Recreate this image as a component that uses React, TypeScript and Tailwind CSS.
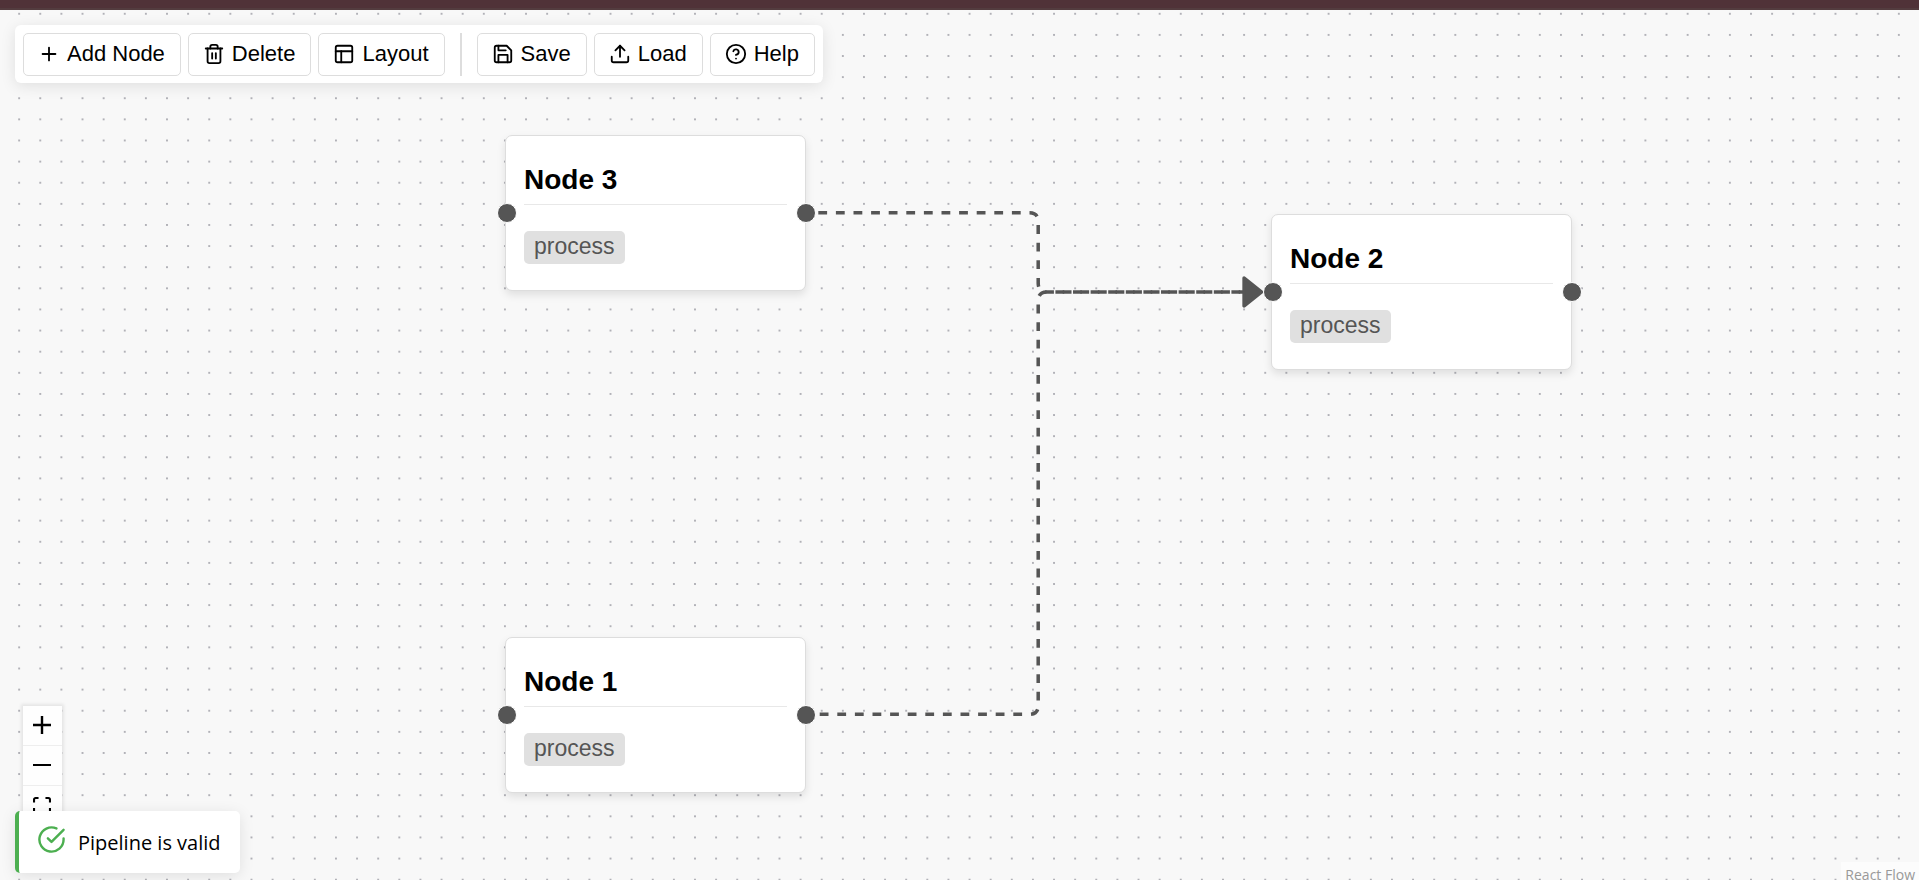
import type { ReactNode } from "react";
import { FiCheckCircle, FiHelpCircle, FiLayout, FiPlus, FiSave, FiTrash2, FiUpload } from "react-icons/fi";

type FlowNode = { id: string; label: string; kind: string; x: number; y: number };

const nodes: FlowNode[] = [
  { id: "3", label: "Node 3", kind: "process", x: 505, y: 125 },
  { id: "2", label: "Node 2", kind: "process", x: 1271, y: 204 },
  { id: "1", label: "Node 1", kind: "process", x: 505, y: 627 },
];

function ToolButton({ icon, children }: { icon: ReactNode; children: ReactNode }) {
  return (
    <button
      type="button"
      className="flex items-center gap-[7px] rounded-[5px] border border-[#dddddd] bg-white pt-[7px] pr-[15px] pb-[9px] pl-[14px] text-[22px] leading-[25px] whitespace-nowrap text-black"
    >
      {icon}
      {children}
    </button>
  );
}

function Toolbar() {
  return (
    <div
      role="toolbar"
      className="absolute top-[15px] left-[15px] flex gap-[7px] rounded-md bg-white pt-2 pr-2 pb-[7px] pl-2 shadow-[0_3px_15px_rgba(0,0,0,0.1)]"
    >
      <ToolButton icon={<FiPlus size={22} />}>Add Node</ToolButton>
      <ToolButton icon={<FiTrash2 size={22} />}>Delete</ToolButton>
      <ToolButton icon={<FiLayout size={22} />}>Layout</ToolButton>
      <div className="mx-2 w-[2px] bg-[#dddddd]" />
      <ToolButton icon={<FiSave size={22} />}>Save</ToolButton>
      <ToolButton icon={<FiUpload size={22} />}>Load</ToolButton>
      <ToolButton icon={<FiHelpCircle size={22} />}>Help</ToolButton>
    </div>
  );
}

function Dots() {
  return (
    <svg className="absolute inset-0 h-full w-full" aria-hidden="true">
      <pattern id="dots" x="8.6" y="-6.8" width="21.12" height="21.12" patternUnits="userSpaceOnUse">
        <circle cx="10.56" cy="10.56" r="0.88" fill="#91919a" />
      </pattern>
      <rect width="100%" height="100%" fill="url(#dots)" />
    </svg>
  );
}

function Edges() {
  return (
    <svg className="absolute inset-0 h-full w-full" aria-hidden="true" fill="none" stroke="#555555" strokeWidth="3.52">
      <path
        strokeDasharray="8.8"
        d="M819.7 704.3 L1029.4 704.3 Q1038.2 704.3 1038.2 695.5 L1038.2 290.8 Q1038.2 282 1047 282 L1261.6 282"
      />
      <path
        strokeDasharray="8.8"
        d="M818.3 202.8 L1029.4 202.8 Q1038.2 202.8 1038.2 211.6 L1038.2 273.2 Q1038.2 282 1047 282 L1261.6 282"
      />
      <path strokeLinejoin="round" fill="#555555" d="M1244.1 268 L1261.6 282 L1244.1 296 Z" />
    </svg>
  );
}

function NodeCard({ node }: { node: FlowNode }) {
  return (
    <article
      className="absolute w-[301px] rounded-[7px] border border-[#dddddd] bg-white px-[18px] pt-[27px] pb-[26px] shadow-[0_4px_9px_rgba(0,0,0,0.1)]"
      style={{ left: node.x, top: node.y }}
    >
      <h3 className="border-b border-[#e8e8e8] pb-2 text-[28px] leading-[33px] font-bold text-black">{node.label}</h3>
      <div className="mt-[26px] flex">
        <span className="rounded-[5px] bg-[#e0e0e0] px-[10px] pt-[3px] pb-[5px] text-[23px] leading-[25px] text-[#555555]">
          {node.kind}
        </span>
      </div>
      <span className="absolute top-1/2 -left-[9px] size-5 -translate-y-1/2 rounded-full border border-white bg-[#555555]" />
      <span className="absolute top-1/2 -right-[11px] size-5 -translate-y-1/2 rounded-full border border-white bg-[#555555]" />
    </article>
  );
}

function ControlButton({ label, viewBox, d }: { label: string; viewBox: string; d: string }) {
  return (
    <button
      type="button"
      aria-label={label}
      className="flex h-10 w-[39px] items-center justify-center border-b border-[#eeeeee] bg-[#fefefe] pr-px pb-px"
    >
      <svg viewBox={viewBox} className="w-[18px]">
        <path d={d} />
      </svg>
    </button>
  );
}

function Controls() {
  return (
    <div className="absolute bottom-[14px] left-[23px] flex flex-col shadow-[0_0_3px_2px_rgba(0,0,0,0.08)]">
      <ControlButton
        label="Zoom in"
        viewBox="0 0 32 32"
        d="M32 18.133H18.133V32h-4.266V18.133H0v-4.266h13.867V0h4.266v13.867H32z"
      />
      <ControlButton label="Zoom out" viewBox="0 0 32 5" d="M0 0h32v4.2H0z" />
      <ControlButton
        label="Fit view"
        viewBox="0 0 32 30"
        d="M3.692 4.63c0-.53.4-.938.939-.938h5.215V0H4.708C2.13 0 0 2.054 0 4.63v5.216h3.692V4.631zM27.354 0h-5.2v3.692h5.17c.53 0 .984.4.984.939v5.215H32V4.631A4.624 4.624 0 0 0 27.354 0zm.954 24.83c0 .532-.4.94-.939.94h-5.215v3.768h5.215c2.577 0 4.631-2.13 4.631-4.707v-5.139h-3.692v5.139zm-23.677.94a.919.919 0 0 1-.939-.94v-5.138H0v5.139c0 2.577 2.13 4.707 4.708 4.707h5.138V25.77H4.631z"
      />
      <ControlButton
        label="Toggle interactivity"
        viewBox="0 0 25 32"
        d="M21.333 10.667H19.81V7.619C19.81 3.429 16.38 0 12.19 0 8 0 4.571 3.429 4.571 7.619v3.048H3.048A3.056 3.056 0 0 0 0 13.714v15.238A3.056 3.056 0 0 0 3.048 32h18.285a3.056 3.056 0 0 0 3.048-3.048V13.714a3.056 3.056 0 0 0-3.048-3.047z"
      />
    </div>
  );
}

function StatusToast() {
  return (
    <div
      role="status"
      className="absolute bottom-[7px] left-[15px] flex items-center gap-3 rounded-[5px] border-l-4 border-[#4caf50] bg-white py-[14px] pr-[19px] pl-[18px] shadow-[0_3px_15px_rgba(0,0,0,0.1)]"
    >
      <FiCheckCircle size={29} className="mb-[5px] text-[#4caf50]" />
      <p className="pt-[2px] font-['Open_Sans','Noto_Sans',sans-serif] text-[20px] leading-[30px] text-black">
        Pipeline is valid
      </p>
    </div>
  );
}

export default function App() {
  return (
    <div className="flex h-screen flex-col overflow-hidden font-['Liberation_Sans',Arial,sans-serif]">
      <header className="h-[10px] shrink-0 border-b-2 border-[#533c3f] bg-[#503238]" />
      <main className="relative flex-1 overflow-hidden bg-[#f8f8f8]">
        <Dots />
        <Edges />
        {nodes.map((node) => (
          <NodeCard key={node.id} node={node} />
        ))}
        <Toolbar />
        <Controls />
        <a
          href="https://reactflow.dev"
          className="absolute right-0 -bottom-[8px] bg-white/50 px-1 py-[3px] font-['Open_Sans','Noto_Sans',sans-serif] text-[14px] leading-5 text-[#999999]"
        >
          React Flow
        </a>
        <StatusToast />
      </main>
    </div>
  );
}
